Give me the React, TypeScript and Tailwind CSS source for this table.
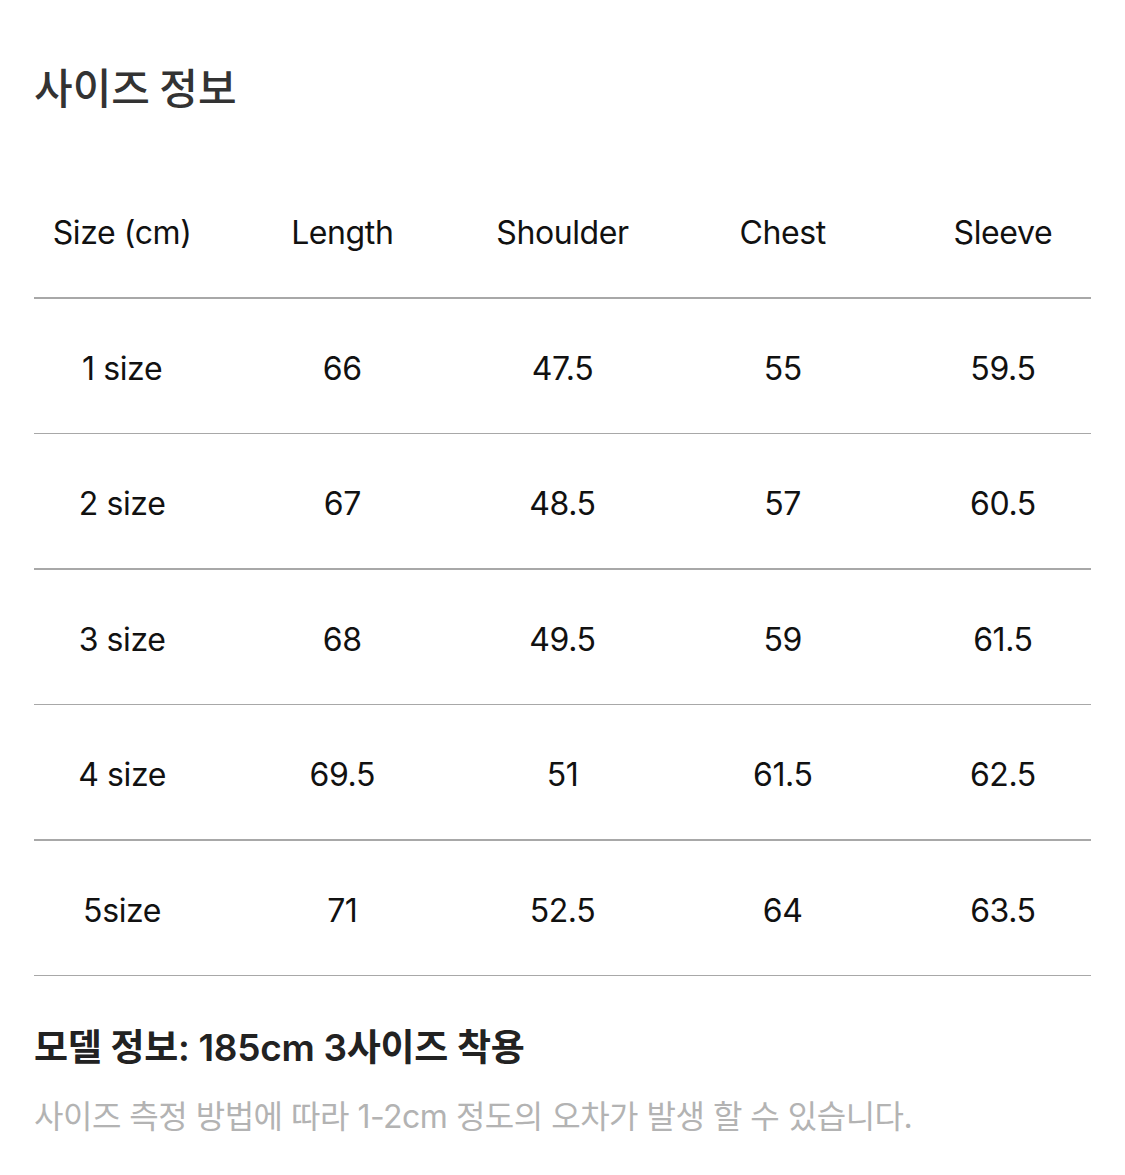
const headers = ["Size (cm)", "Length", "Shoulder", "Chest", "Sleeve"];

const rows = [
  ["1 size", "66", "47.5", "55", "59.5"],
  ["2 size", "67", "48.5", "57", "60.5"],
  ["3 size", "68", "49.5", "59", "61.5"],
  ["4 size", "69.5", "51", "61.5", "62.5"],
  ["5size", "71", "52.5", "64", "63.5"],
];

function Row({ cells }: { cells: string[] }) {
  return (
    <div className="flex flex-col">
      <div className="grid grid-cols-5 h-[134px] items-center pt-[6px]">
        {cells.map((c, i) => (
          <div key={i} className="text-center text-[32px] tracking-[-0.4px] text-[#111]">
            {c}
          </div>
        ))}
      </div>
      <div className="mx-[22px] h-[1.5px] bg-[#a8a8a8]" />
    </div>
  );
}

export default function App() {
  return (
    <div className="w-[1125px] h-[1175px] bg-white font-['Inter','Noto_Sans_CJK_KR',sans-serif]">
      <div className="px-[12px]">
        <h1 className="ml-[22px] pt-[58px] h-[163px] text-[42px] font-medium leading-[56px] text-[#333] font-['Noto_Sans_CJK_KR',sans-serif]">
          사이즈 정보
        </h1>
        <Row cells={headers} />
        {rows.map((r, i) => (
          <Row key={i} cells={r} />
        ))}
        <div className="ml-[22px] pt-[46px] text-[37px] font-semibold leading-[52px] text-[#222] tracking-[-0.3px]">
          모델 정보: 185cm 3사이즈 착용
        </div>
        <div className="ml-[22px] pt-[20px] text-[32px] leading-[46px] text-[#b3b3b3] tracking-[-0.5px]">
          사이즈 측정 방법에 따라 1-2cm 정도의 오차가 발생 할 수 있습니다.
        </div>
      </div>
    </div>
  );
}
